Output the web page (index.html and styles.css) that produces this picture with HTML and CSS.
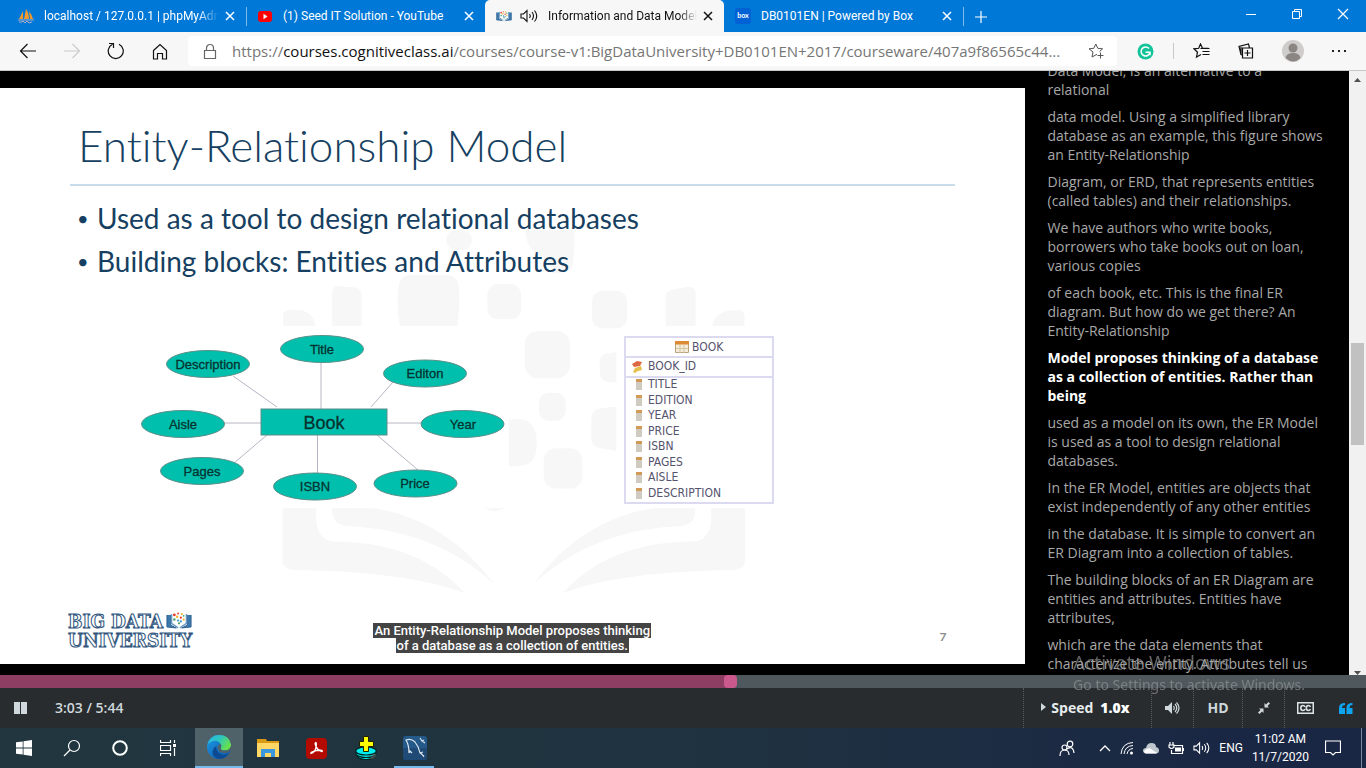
FILE: index.html
```html
<!DOCTYPE html>
<html lang="en">
<head>
<meta charset="utf-8">
<title>Information and Data Models</title>
<link rel="stylesheet" href="styles.css">
</head>
<body>
<svg width="0" height="0" class="defs" aria-hidden="true">
  <defs>
    <symbol id="x" viewBox="0 0 10 10"><path d="M1 1l8 8M9 1l-8 8" stroke="currentColor" stroke-width="1.5" fill="none"/></symbol>
    <symbol id="book" viewBox="0 0 28 18">
      <path d="M1 3v13l10 1-6-3V3M27 3v13l-10 1 6-3V3" fill="#3b79ad" stroke="#2a5d8d"/>
      <path d="M6 2v10l7 5M22 2v10l-7 5" fill="none" stroke="#6b9cc4" stroke-width="1.6"/>
      <g fill="#e8402c"><circle cx="9" cy="3" r="1.5"/><circle cx="16" cy="6" r="1.2"/><circle cx="13" cy="1.500" r="1"/></g>
      <g fill="#f3b42c"><circle cx="12" cy="5" r="1.300"/><circle cx="19" cy="8" r="1.200"/><circle cx="17" cy="2" r="1.200"/></g>
      <g fill="#4aa564"><circle cx="9" cy="8" r="1.300"/><circle cx="19" cy="4" r="1"/><circle cx="14" cy="12" r="1.200"/></g>
      <g fill="#3596d2"><circle cx="13" cy="9" r="1.200"/><circle cx="16" cy="10" r="1.200"/></g>
    </symbol>
    <symbol id="sound" viewBox="0 0 18 14"><path d="M1 5h2.500L7 1.500v11L3.500 9H1zM9.500 5q1.500 2 0 4M12 3q3 4 0 8M14.500 1.500q4.500 5.500 0 11" fill="none" stroke="currentColor" stroke-width="1.100"/></symbol>
    <linearGradient id="edge-b" x1="0" y1="0" x2="1" y2="1"><stop offset="0" stop-color="#1f9ce4"/><stop offset="1" stop-color="#0a50a8"/></linearGradient>
    <linearGradient id="edge-g" x1="0" y1="0" x2="1" y2=".5"><stop offset="0" stop-color="#2bb5e8"/><stop offset=".5" stop-color="#2cc5c0"/><stop offset="1" stop-color="#66e04c"/></linearGradient>
  </defs>
</svg>

<header class="tabs">
  <div class="tab">
    <svg class="tab-icon" viewBox="0 0 16 16"><path d="M1 11L5 3v8zM6 11L8 1q3 4 3 10zM11 3q3 4 4 8h-3z" fill="#f29a2e"/><path d="M0 12h16M1 14h3l1-1 2 2 2-2 2 2 3-1" stroke="#a9adc8" fill="none"/></svg>
    <span class="tab-title fade">localhost / 127.0.0.1 | phpMyAdmin</span>
    <button class="tab-close" aria-label="Close tab"><svg width="10" height="10"><use href="#x"/></svg></button>
  </div>
  <div class="tab divided">
    <svg class="tab-icon" viewBox="0 0 16 16"><rect x="1" y="3" width="14" height="11" rx="3" fill="#f00"/><path d="M6.500 5.800l4 2.700-4 2.700z" fill="#fff"/></svg>
    <span class="tab-title">(1) Seed IT Solution - YouTube</span>
    <button class="tab-close" aria-label="Close tab"><svg width="10" height="10"><use href="#x"/></svg></button>
  </div>
  <div class="tab active">
    <svg class="tab-icon" viewBox="0 0 28 18"><use href="#book"/></svg>
    <svg class="tab-sound" width="18" height="14"><use href="#sound"/></svg>
    <span class="tab-title fade">Information and Data Models</span>
    <button class="tab-close" aria-label="Close tab"><svg width="10" height="10"><use href="#x"/></svg></button>
  </div>
  <div class="tab">
    <span class="tab-icon box">box</span>
    <span class="tab-title">DB0101EN | Powered by Box</span>
    <button class="tab-close" aria-label="Close tab"><svg width="10" height="10"><use href="#x"/></svg></button>
  </div>
  <button class="new-tab" aria-label="New tab"><svg width="14" height="14"><path d="M7 1v12M1 7h12" stroke="#fff" stroke-width="1.200"/></svg></button>
  <div class="window-buttons">
    <button aria-label="Minimize"><svg width="10" height="10"><path d="M0 5.500h10" stroke="#fff"/></svg></button>
    <button aria-label="Restore"><svg width="10" height="10"><path d="M.5 2.500h7v7h-7zM2.500 2V.5h7v7H8" fill="none" stroke="#fff"/></svg></button>
    <button aria-label="Close"><svg width="12" height="12"><path d="M1 1l10 10M11 1L1 11" stroke="#fff" stroke-width="1.200"/></svg></button>
  </div>
</header>

<nav class="toolbar">
  <button aria-label="Back"><svg width="18" height="16"><path d="M17 8H2M8.500 1L1.500 8l7 7" fill="none" stroke="#111" stroke-width="1.200"/></svg></button>
  <button aria-label="Forward"><svg width="18" height="16"><path d="M1 8h15M9.500 1l7 7-7 7" fill="none" stroke="#ccc" stroke-width="1.200"/></svg></button>
  <button aria-label="Refresh"><svg width="18" height="18"><path d="M12 2.300A7.500 7.500 0 1 1 5.500 2.300M2 1.500h4.500V6" fill="none" stroke="#111" stroke-width="1.200"/></svg></button>
  <button aria-label="Home"><svg width="16" height="17"><path d="M1.500 7.500L8 1.500l6.500 6V16h-4v-5.500h-5V16h-4z" fill="none" stroke="#111" stroke-width="1.200"/></svg></button>
  <div class="address">
    <svg width="14" height="17"><path d="M1.500 7.500h11v8h-11zM3.500 7.500V5a3.500 3.500 0 0 1 7 0v2.500" fill="none" stroke="#666" stroke-width="1.200"/></svg>
    <a class="url" href="#">https://<b>courses.cognitiveclass.ai</b>/courses/course-v1:BigDataUniversity+DB0101EN+2017/courseware/407a9f86565c44...</a>
    <button class="star" aria-label="Add to favorites"><svg width="17" height="16"><path d="M9 11.300L4 14l1-5L1 5.800l4.800-.5L7.800 1l2 4.300 4.800.5-3 2.700M12.500 9.500v6M9.500 12.500h6" fill="none" stroke="#555"/></svg></button>
  </div>
  <div class="extensions">
    <button aria-label="Grammarly"><svg width="17" height="17"><circle cx="8.500" cy="8.500" r="8" fill="#15c39a"/><path d="M12 5.500A4.500 4.500 0 1 0 13 9.500M8.500 9.200H13v3" fill="none" stroke="#fff" stroke-width="1.500"/></svg></button>
    <i class="rule"></i>
    <button aria-label="Favorites"><svg width="17" height="16"><path d="M8 11.500L3.500 14l1-4.800L1 5.800l4.700-.5L7.500 1l2 4.300h6M9.500 8.500h7M9.500 11.500h7M7.500 5.500h9" fill="none" stroke="#111" stroke-width="1.200"/></svg></button>
    <button aria-label="Collections"><svg width="16" height="16"><path d="M4.500 5h10v10h-10zM9.500 7v6M6.500 10h6M4 12L3 11.500 1 3.500 10.500 1l1 4M3 4v8" fill="none" stroke="#111" stroke-width="1.200"/></svg></button>
    <button aria-label="Profile"><svg width="22" height="22"><circle cx="11" cy="11" r="11" fill="#cfcdcb"/><circle cx="11" cy="8" r="4.500" fill="#8b8683"/><path d="M3.500 18q1-5 7.500-5t7.500 5q-7 7-15 0z" fill="#8b8683"/></svg></button>
    <button aria-label="Settings and more"><svg width="15" height="3"><path d="M0 0h2v2H0zM6 0h2v2H6zM12 0h2v2h-2z" fill="#222"/></svg></button>
  </div>
</nav>

<main class="player">
  <section class="slide">
    <svg class="watermark" viewBox="0 0 1025 576" aria-hidden="true">
      <g transform="translate(260 122) scale(.33333)" fill="#f7f7f7">
        <path d="M70 348v-32q0-16 20-16h30q40 5 47 48zM217 348V245q2-18 22-17l45 4q21 3 21 20v96zM420 348Q408 280 418 222q4-26 34-27h105q36 0 40 32 4 60-4 121zM1218 348V260q0-16 16-20l50-10q22-2 24 16v102zM1357 348q10-40 50-46l30-2q18 2 18 20v28z"/>
        <rect x="683" y="222" width="101" height="106" rx="32"/>
        <rect x="560" y="60" width="76" height="60" rx="28"/>
        <path d="M798 60h146q2 60-6 108-4 16-20 18l-40 4q0-30-30-50-50-20-50-80z"/>
        <rect x="997" y="242" width="105" height="113" rx="32"/>
        <rect x="795" y="363" width="136" height="142" rx="40"/>
        <path d="M1070 427v90h-22q-28-4-28-30v-32q2-24 28-26zM1070 590v133l-46-8q-28-4-29-30v-60q2-28 30-31zM747 630q40-8 62 8 22 14 22 62 0 46-22 60-20 12-62 8z"/>
        <rect x="838" y="548" width="80" height="84" rx="28"/>
        <rect x="852" y="715" width="116" height="121" rx="36"/>
        <path d="M675 895h58q-26 16-58 0z"/>
        <path id="page-l" d="M68 895H170Q160 1000 235 995 480 1000 615 1150 450 1085 100 1080q-32-2-32-30zM217 895H345Q560 930 702 1122 530 960 260 948q-44-2-43-53z"/>
        <use href="#page-l" transform="translate(1524 0) scale(-1 1)"/>
      </g>
    </svg>
    <h1 class="slide-title">Entity-Relationship Model</h1>
    <ul class="bullets">
      <li>Used as a tool to design relational databases</li>
      <li>Building blocks: Entities and Attributes</li>
    </ul>
    <div class="figures">
      <svg class="er" width="390" height="190" viewBox="0 0 390 190" role="img" aria-label="Book entity with attributes">
        <path d="M103 56l44 31M191 42v48M263 62l-22 25M94 103h37M257 103h35M137 115l-33 28M187.500 115v39M247 115l41 35" stroke="#b9b4c4" fill="none"/>
        <g fill="#00bfad" stroke="#5b8f88">
          <rect x="131" y="89" width="126" height="26"/>
          <ellipse cx="78" cy="44" rx="41.500" ry="13.500"/>
          <ellipse cx="192" cy="29" rx="41.500" ry="13.500"/>
          <ellipse cx="295" cy="53.500" rx="41.500" ry="13.500"/>
          <ellipse cx="53" cy="104" rx="41.500" ry="13.500"/>
          <ellipse cx="332.500" cy="104" rx="41.500" ry="13.500"/>
          <ellipse cx="72" cy="151" rx="41.500" ry="13.500"/>
          <ellipse cx="185" cy="166.500" rx="41.500" ry="13.500"/>
          <ellipse cx="285.500" cy="163.500" rx="41.500" ry="13.500"/>
        </g>
        <g class="er-text">
          <text x="78" y="49">Description</text><text x="192" y="34">Title</text>
          <text x="295" y="58">Editon</text><text x="53" y="109">Aisle</text>
          <text x="333" y="109">Year</text><text x="72" y="156">Pages</text>
          <text x="185" y="171">ISBN</text><text x="285" y="168">Price</text>
          <text class="er-main" x="194" y="109">Book</text>
        </g>
      </svg>
      <table class="entity">
        <thead><tr><th colspan="2"><svg width="14" height="12"><path d="M.5.5h13v11H.5z" fill="#f4ecd6" stroke="#b9a27c"/><path d="M0 0h14v3.500H0z" fill="#dd8a35"/><path d="M5 4v8M9 4v8M1 7.500h12" stroke="#d4c7a6"/></svg> BOOK</th></tr></thead>
        <tbody>
          <tr class="key"><td><svg width="12" height="13"><path d="M1 4l5-3 5 1-2 4-6 1z" fill="#dd6a45"/><path d="M2 12l2-4 6-2 1 4-4 1-3 2z" fill="#e5c04c"/></svg></td><td>BOOK_ID</td></tr>
          <tr><td><i class="col"></i></td><td>TITLE</td></tr>
          <tr><td><i class="col"></i></td><td>EDITION</td></tr>
          <tr><td><i class="col"></i></td><td>YEAR</td></tr>
          <tr><td><i class="col"></i></td><td>PRICE</td></tr>
          <tr><td><i class="col"></i></td><td>ISBN</td></tr>
          <tr><td><i class="col"></i></td><td>PAGES</td></tr>
          <tr><td><i class="col"></i></td><td>AISLE</td></tr>
          <tr><td><i class="col"></i></td><td>DESCRIPTION</td></tr>
        </tbody>
      </table>
    </div>
    <footer class="slide-foot">
      <div class="logo">
        <div class="logo-row"><span>BIG DATA</span><svg width="26" height="17"><use href="#book"/></svg></div>
        <div>UNIVERSITY</div>
      </div>
      <span class="page-no">7</span>
    </footer>
    <p class="caption"><span>An Entity-Relationship Model proposes thinking<br>of a database as a collection of entities.</span></p>
  </section>

  <aside class="transcript">
    <div class="lines">
      <p>Data Model, is an alternative to a relational</p>
      <p>data model. Using a simplified library database as an example, this figure shows an Entity-Relationship</p>
      <p>Diagram, or ERD, that represents entities (called tables) and their relationships.</p>
      <p>We have authors who write books, borrowers who take books out on loan, various copies</p>
      <p>of each book, etc. This is the final ER diagram. But how do we get there? An Entity-Relationship</p>
      <p class="current">Model proposes thinking of a database as a collection of entities. Rather than being</p>
      <p>used as a model on its own, the ER Model is used as a tool to design relational databases.</p>
      <p>In the ER Model, entities are objects that exist independently of any other entities</p>
      <p>in the database. It is simple to convert an ER Diagram into a collection of tables.</p>
      <p>The building blocks of an ER Diagram are entities and attributes. Entities have attributes,</p>
      <p>which are the data elements that characterize the entity. Attributes tell us</p>
    </div>
    <div class="scrollbar">
      <svg width="17" height="17"><path d="M5 11h7L8.500 7z" fill="#505050"/></svg>
      <i class="before"></i><i class="thumb"></i><i class="after"></i>
      <svg width="17" height="5"><path d="M5 1h7L8.500 5z" fill="#505050"/></svg>
    </div>
  </aside>
</main>

<input class="seek" type="range" min="0" max="344" value="184" aria-label="Video position">

<section class="controls">
  <button class="pause" aria-label="Pause"><svg width="13" height="12"><path d="M0 0h6v12H0zM7 0h6v12H7z" fill="#cfd8dc"/></svg></button>
  <span class="time">3:03 / 5:44</span>
  <div class="options">
    <button class="opt speed"><svg width="5" height="8"><path d="M0 0l5 4-5 4z" fill="#cfd8dc"/></svg><span>Speed</span><b>1.0x</b></button>
    <button class="opt" aria-label="Volume"><svg width="15" height="12"><path d="M0 4h3l4-4v12L3 8H0z" fill="#cfd8dc"/><path d="M8.500 4q1.500 2 0 4M10 2q3.500 4 0 8M11.500.5q5 5.500 0 11" fill="none" stroke="#cfd8dc" stroke-width="1.200"/></svg></button>
    <button class="opt hd">HD</button>
    <button class="opt" aria-label="Exit full browser"><svg width="12" height="12"><path d="M6.500 5.500V1l1.500 1.500L10.500 0 12 1.500 9.500 4 11 5.500zM5.500 6.500V11L4 9.500 1.500 12 0 10.500 2.500 8 1 6.500z" fill="#cfd8dc"/></svg></button>
    <button class="opt" aria-label="Closed captions"><svg width="17" height="12"><path d="M.75.75h15.500v10.500H.75z" fill="none" stroke="#dde4e7" stroke-width="1.500"/><path d="M8 4.800Q7.300 3.500 6 3.500 3.800 3.500 3.800 6T6 8.500q1.300 0 2-1.300M13.500 4.800q-.7-1.300-2-1.300Q9.300 3.500 9.300 6t2.200 2.500q1.300 0 2-1.300" fill="none" stroke="#dde4e7" stroke-width="1.600"/></svg></button>
    <button class="opt quote" aria-label="Transcript"><svg width="14" height="11"><path d="M6 0v2Q3 2 3 5h3v6H0V5Q0 0 6 0zM13.500 0v2q-3 0-3 3h3v6h-6V5q0-5 6-5z" fill="#0ea5f0"/></svg></button>
  </div>
</section>

<footer class="taskbar">
  <button class="task" aria-label="Start"><svg width="16" height="16"><path d="M0 2.300L6.700 1.400V7.600H0zM7.500 1.200L16 0v7.600H7.500zM0 8.400h6.700v6.200L0 13.700zM7.500 8.400H16V16l-8.500-1.200z" fill="#fff"/></svg></button>
  <button class="task" aria-label="Search"><svg width="18" height="18"><circle cx="11" cy="7" r="5.500" fill="none" stroke="#fff" stroke-width="1.200"/><path d="M7 11l-6 6" stroke="#fff" stroke-width="1.300"/></svg></button>
  <button class="task" aria-label="Cortana"><svg width="16" height="16"><circle cx="8" cy="8" r="6.800" fill="none" stroke="#fff" stroke-width="2"/></svg></button>
  <button class="task" aria-label="Task view"><svg width="16" height="16"><path d="M.5 0v2.500h10V0M.5 5.500h10v5H.500zM.5 16v-2.500h10V16M14.500 0v3M14.500 8v8" fill="none" stroke="#fff" stroke-width="1.200"/><path d="M13 4h3v3h-3z" fill="#fff"/></svg></button>
  <button class="task open selected" aria-label="Microsoft Edge"><svg width="24" height="24"><circle cx="12" cy="12" r="12" fill="url(#edge-b)"/><path d="M.5 9.500Q3 0 12 0q10.500 0 12 9.500.5 6-6 6-5 0-4-3 1-2-1-4.500Q8 3 .5 9.500z" fill="url(#edge-g)"/><path d="M9.500 11q-1 5 4 8 4 2 8-.5Q17 25 10 23.500 4 20 6 15q1-3 3.500-4z" fill="#0c4a94"/><path d="M13.500 9q-4 1-2.500 5.500 3 5 10 3l2.500-1.700 1-3.800-1-.5q-1 4-5.500 4-5 0-4-3 .5-1.500-.5-3.500z" fill="#4f6169"/></svg></button>
  <button class="task" aria-label="File Explorer"><svg width="22" height="18"><path d="M0 0h9l1 2H22v16H0z" fill="#d99a13"/><path d="M0 4h22v14H0z" fill="#ffd767"/><path d="M4 18v-8h14v8h-4v-4H8v4z" fill="#3a96dd"/></svg></button>
  <button class="task" aria-label="Acrobat Reader"><svg width="21" height="21"><rect width="21" height="21" rx="4" fill="#b30b00"/><path d="M5 15.500q4-1.500 5-6 .8-5-.3-5-1.400.5.300 4 2 4 5.500 5 1.500-.3.500-1-3-.8-9 1-2.500 1-2 2z" fill="none" stroke="#fff" stroke-width="1.300"/></svg></button>
  <button class="task" aria-label="Disk tool"><svg width="22" height="24"><g fill="#0ee" stroke="#022" stroke-width="1.200"><ellipse cx="11" cy="19.500" rx="9" ry="4"/><ellipse cx="11" cy="17.500" rx="10" ry="4"/><ellipse cx="11" cy="15" rx="10.300" ry="4"/></g><path d="M18 18h3v2l-3 3h-3z" fill="#555" opacity=".7"/><path d="M8.500.5h5v5h5v5h-5v5h-5v-5h-4v-5h4z" fill="#ff0" stroke="#221f00"/></svg></button>
  <button class="task" aria-label="MySQL Workbench"><svg width="24" height="24"><rect width="24" height="24" rx="3" fill="#24598a"/><path d="M0 12h24v9q0 3-3 3H3q-3 0-3-3z" fill="#1e4a75"/><path d="M9 17l-2-2-1 2Q6 9 3 4q5-2 9 2 4 5 5 11l4 3M17 17l3-1M18 17l3 4M17 2l2 3 2-1M19 5l3 2" fill="none" stroke="#dbe6ef" stroke-width="1.200"/></svg></button>

  <div class="tray">
    <svg class="people" width="16" height="17"><g fill="none" stroke="#fff" stroke-width="1.200"><circle cx="11" cy="4" r="2.800"/><circle cx="5.500" cy="7.500" r="2.500"/><path d="M1 16q0-6 4.500-6t4.500 5M8 9q6-4 7 4"/></g></svg>
    <svg width="12" height="8"><path d="M1 7l5-5 5 5" fill="none" stroke="#fff" stroke-width="1.300"/></svg>
    <svg width="14" height="14"><g fill="none" stroke="#fff"><path d="M1 13Q2 2 13 1.500"/><path d="M4 13Q5 5 13 4.500"/><path d="M7 13q1-5 6-5.500"/></g><circle cx="11.500" cy="12" r="1.500" fill="#fff"/></svg>
    <svg width="16" height="11"><path d="M3 10.500Q0 10 0 7.500T3 5Q4 0 8.500 0T13 4q3 .5 3 3.500t-3 3z" fill="#bfc6cd"/><path d="M3 10.500Q1 10 1 8q4-4 7-2l6 4-1 .5z" fill="#fff"/></svg>
    <svg width="16" height="13"><path d="M5 3.500h9.500v8H3.500V8M15.500 6v3M1 3v2q2.500 3 5 0V3zM2 3V0M5 3V0" fill="none" stroke="#fff" stroke-width="1.200"/><path d="M7 5.500h6v4H7z" fill="#fff"/></svg>
    <svg class="white" width="17" height="14"><use href="#sound"/></svg>
    <span class="lang">ENG</span>
    <time class="clock"><span>11:02 AM</span><span>11/7/2020</span></time>
    <button class="notes" aria-label="Notifications"><svg width="16" height="16"><path d="M.5 1h15v11.500h-5L8 15l-2.500-2.500h-5z" fill="none" stroke="#fff" stroke-width="1.200"/></svg></button>
    <i class="peek"></i>
  </div>
</footer>

<div class="activate"><strong>Activate Windows</strong><span>Go to Settings to activate Windows.</span></div>
</body>
</html>
```

FILE: styles.css
```css
* { box-sizing: border-box; }
html, body { height: 100%; }
body {
  margin: 0;
  display: flex;
  flex-direction: column;
  overflow: hidden;
  background: #000;
  font-family: "Open Sans", "Noto Sans", sans-serif;
}
button { border: 0; padding: 0; background: none; color: inherit; font: inherit; display: flex; align-items: center; justify-content: center; }
svg { display: block; flex: none; }
.defs { position: absolute; }

/* browser tabs */
.tabs { display: flex; flex: none; height: 32px; background: #0078d7; color: #fff; font: 12px Roboto, sans-serif; }
.tab { width: 239px; display: flex; align-items: center; padding: 0 9px 0 11px; position: relative; }
.tab:first-child { width: 246px; padding-left: 18px; }
.tab.divided::before { content: ""; position: absolute; left: 0; top: 7px; bottom: 6px; width: 1px; background: #7fb9ea; }
.tab.active { background: #f7f7f7; color: #111; border-radius: 5px 5px 0 0; }
.tab-icon { width: 16px; height: 16px; flex: none; }
.tab-sound { margin-left: 8px; }
.tab-title { margin-left: 10px; flex: 1; white-space: nowrap; overflow: hidden; }
.fade { -webkit-mask-image: linear-gradient(to right, #000 88%, transparent); mask-image: linear-gradient(to right, #000 88%, transparent); }
.tab-close { width: 14px; height: 14px; margin-left: 4px; }
.box { background: #0061d5; border-radius: 3px; font: bold 7px/15px Lato, sans-serif; text-align: center; }
.new-tab { width: 34px; border-left: 1px solid #7fb9ea; margin: 7px 0 6px; }
.window-buttons { margin-left: auto; display: flex; padding-bottom: 4px; }
.window-buttons button { width: 46px; }

/* address bar */
.toolbar { display: flex; flex: none; height: 39px; align-items: center; background: #f7f7f7; border-bottom: 1px solid #c8c8c8; padding-left: 6px; }
.toolbar > button { width: 44px; }
.address { flex: 1; height: 30px; margin-left: 6px; display: flex; align-items: center; background: #fff; border-radius: 4px; padding: 0 12px 0 15px; min-width: 0; }
.url { flex: 1; margin-left: 15px; font-size: 15px; color: #767676; text-decoration: none; white-space: nowrap; overflow: hidden; }
.url b { color: #111; font-weight: 400; }
.extensions { width: 249px; display: flex; align-items: center; gap: 28px; padding: 0 0 0 20px; }
.rule { width: 1px; height: 16px; margin: 0 -9px; background: #c8c8c8; }

/* player */
.player { flex: 1; min-height: 0; display: flex; align-items: stretch; background: #000; }
.slide { width: 75%; flex: none; margin: 17px 0 11px; background: #fff; position: relative; display: flex; flex-direction: column; color: #163f61; font-family: Lato, sans-serif; font-variant-ligatures: none; }
.watermark { position: absolute; inset: 0; width: 100%; height: 100%; }
.slide > :not(.watermark):not(.caption) { position: relative; }
.slide-title { margin: 0 70px; padding: 27px 8px 9px; border-bottom: 2px solid #c9dcea; font-size: 44px; line-height: 60px; font-weight: 300; }
.bullets { margin: 11px 70px 0; padding: 0 0 0 27px; font-size: 28px; line-height: 43px; list-style: none; }
.bullets li::before { content: "•"; float: left; margin-left: -20px; font-size: 20px; }
.figures { display: flex; align-items: flex-start; gap: 104px; padding: 37px 0 0 130px; }
.er-text { font: 13px "Liberation Sans", sans-serif; text-anchor: middle; fill: #06322f; stroke: #06322f; stroke-width: .3px; }
.er-main { font-size: 18px; }
.entity { width: 150px; height: 168px; margin-top: 16px; border: 2px solid #dcdaf0; border-collapse: collapse; background: #fff; color: #55536d; font: 12px/15px "DejaVu Sans Condensed", "DejaVu Sans", sans-serif; }
.entity th { font-weight: 400; height: 20px; padding: 0; }
.entity th svg { display: inline-block; vertical-align: -2px; }
.entity td { padding: 0 0 2px; line-height: 13px; }
.entity td:first-child { width: 23px; padding-left: 5px; }
.entity .key td { height: 20px; border: solid #dcdaf0; border-width: 2px 0; }
.col { display: block; margin-left: 5px; width: 6px; height: 11px; border-top: 3px solid #d29a55; background: #d0cbc0; }
.slide-foot { margin-top: auto; display: flex; align-items: center; justify-content: space-between; padding: 0 78px 14px 68px; }
.logo { font: bold 19px/19px "DejaVu Serif Condensed", "DejaVu Serif", serif; color: #fff; -webkit-text-stroke: 1px #2f557d; }
.logo-row { display: flex; justify-content: space-between; }
.page-no { font-size: 12px; font-weight: 700; color: #8b8b8b; padding-top: 10px; }
.caption { position: absolute; left: 0; right: 0; bottom: 11px; margin: 0; text-align: center; font: 500 13px/15px Roboto, sans-serif; color: #fff; }
.caption span { background: #444; padding: 0 1px; -webkit-box-decoration-break: clone; box-decoration-break: clone; }

/* transcript */
.transcript { flex: 1; min-width: 0; display: flex; justify-content: space-between; color: #a8a8a8; font-size: 14px; line-height: 19px; }
.lines { flex: 1; display: flex; flex-direction: column; justify-content: flex-end; overflow: hidden; padding: 0 24px 2px 23px; }
.lines p { margin: 8px 0 0; }
.lines .current { color: #fff; font-weight: 700; }
.scrollbar { width: 17px; flex: none; background: #f1f1f1; display: flex; flex-direction: column; align-items: center; }
.before { flex: 255; }
.thumb { flex: 102; width: 13px; background: #c1c1c1; }
.after { flex: 225; }

/* seek bar */
.seek { -webkit-appearance: none; appearance: none; flex: none; width: 100%; height: 13px; margin: 0; background: linear-gradient(to right, #8e3e63 53.5%, #4f595d 53.5%); }
.seek::-webkit-slider-thumb { -webkit-appearance: none; width: 13px; height: 13px; border-radius: 4px; background: #cb598d; }

/* controls */
.controls { flex: none; height: 40px; display: flex; align-items: center; background: #282c2e; color: #cfd8dc; font-size: 14px; font-weight: 600; }
.pause { width: 41px; }
.time { margin-left: 14px; padding-bottom: 2px; font-size: 14px; }
.options { margin-left: auto; display: flex; height: 100%; }
.opt { width: 42px; border-left: 1px dotted #555b5e; }
.hd { width: 49px; padding-bottom: 2px; font-weight: 700; }
.speed { width: 128px; gap: 5px; padding: 0 4px 2px 0; color: #e7ecee; font-weight: 700; }
.speed b { color: #fff; margin-left: 2px; }
.quote { width: 40px; border-left: 0; }

/* taskbar */
.taskbar { flex: none; height: 40px; display: flex; background: linear-gradient(to right, #21363f, #1f3340 50%, #1a2744 90%); color: #fff; }
.task { width: 49px; }
.task:nth-child(-n+5) { width: 48px; }
.task:nth-child(4) { width: 51px; padding-right: 3px; }
.open { border-bottom: 2px solid #76b9ed; }
.selected { background: #4f6169; }
.task:last-of-type { position: relative; }
.task:last-of-type::after { content: ""; position: absolute; left: 4px; right: 5px; bottom: 0; height: 2px; background: #76b9ed; }
.tray { margin-left: auto; display: flex; align-items: center; gap: 9px; font: 12px Roboto, sans-serif; }
.people { margin-right: 15px; }
.clock { display: flex; flex-direction: column; align-items: center; line-height: 18px; margin: 0 7px 0 0; }
.notes { margin-right: 11px; }
.peek { width: 5px; height: 40px; border-left: 1px solid #7c8699; }

/* activation notice */
.activate { position: fixed; right: 61px; bottom: 73px; display: flex; flex-direction: column; color: rgba(150, 150, 150, .65); font: 14px/20px "Noto Sans", sans-serif; pointer-events: none; }
.activate strong { font-weight: 400; font-size: 19px; line-height: 24px; }
```
